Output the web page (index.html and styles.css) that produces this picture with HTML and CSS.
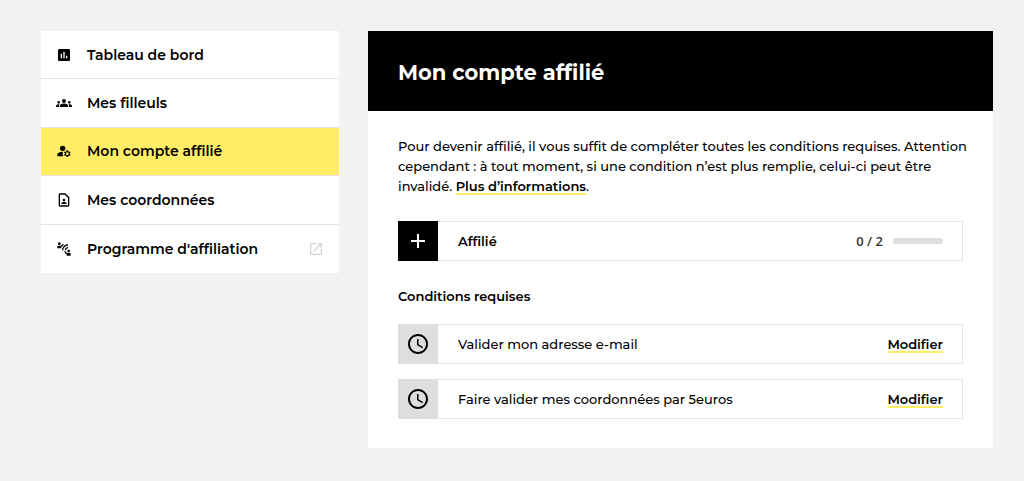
FILE: index.html
```html
<!DOCTYPE html>
<html lang="fr">
<head>
    <meta charset="UTF-8">
    <meta name="viewport" content="width=device-width, initial-scale=1.0">
    <title>Mon compte affilié</title>
    <link rel="stylesheet" href="styles.css">
</head>
<body>
    <div class="page">
        <nav class="menu" aria-label="Espace affilié">
            <a href="#tableau" class="menu-item">
                <svg class="icon" viewBox="0 0 24 24" aria-hidden="true"><path d="M19 3H5c-1.1 0-2 .9-2 2v14c0 1.1.9 2 2 2h14c1.1 0 2-.9 2-2V5c0-1.1-.9-2-2-2zM9 17H7v-7h2v7zm4 0h-2V7h2v10zm4 0h-2v-4h2v4z"/></svg>
                <span class="menu-label">Tableau de bord</span>
            </a>
            <a href="#filleuls" class="menu-item">
                <svg class="icon" viewBox="0 0 24 24" aria-hidden="true"><path d="M12 12.75c1.63 0 3.07.39 4.24.9 1.08.48 1.76 1.56 1.76 2.73V18H6v-1.61c0-1.18.68-2.26 1.76-2.73 1.17-.52 2.61-.91 4.24-.91zM4 13c1.1 0 2-.9 2-2s-.9-2-2-2-2 .9-2 2 .9 2 2 2zm1.13 1.1c-.37-.06-.74-.1-1.13-.1-.99 0-1.93.21-2.78.58C.48 14.9 0 15.62 0 16.43V18h4.5v-1.61c0-.83.23-1.61.63-2.29zM20 13c1.1 0 2-.9 2-2s-.9-2-2-2-2 .9-2 2 .9 2 2 2zm4 3.43c0-.81-.48-1.53-1.22-1.85-.85-.37-1.79-.58-2.78-.58-.39 0-.76.04-1.13.1.4.68.63 1.46.63 2.29V18H24v-1.57zM12 6c1.66 0 3 1.34 3 3s-1.34 3-3 3-3-1.34-3-3 1.34-3 3-3z"/></svg>
                <span class="menu-label">Mes filleuls</span>
            </a>
            <a href="#compte" class="menu-item active" aria-current="page">
                <svg class="icon" viewBox="0 0 24 24" aria-hidden="true"><circle cx="10" cy="8" r="4"/><path d="M10.67 13.02c-.22-.01-.44-.02-.67-.02-2.42 0-4.68.67-6.61 1.82-.88.52-1.39 1.5-1.39 2.53V20h9.26c-.79-1.13-1.26-2.51-1.26-4 0-1.07.25-2.07.67-2.98z"/><path d="M20.75 16c0-.22-.03-.42-.06-.63l1.14-1.01-1-1.73-1.45.49c-.32-.27-.68-.48-1.08-.63L18 11h-2l-.3 1.49c-.4.15-.76.36-1.08.63l-1.45-.49-1 1.73 1.14 1.01c-.03.21-.06.41-.06.63s.03.42.06.63l-1.14 1.01 1 1.73 1.45-.49c.32.27.68.48 1.08.63L16 21h2l.3-1.49c.4-.15.76-.36 1.08-.63l1.45.49 1-1.73-1.14-1.01c.03-.21.06-.41.06-.63zM17 18c-1.1 0-2-.9-2-2s.9-2 2-2 2 .9 2 2-.9 2-2 2z"/></svg>
                <span class="menu-label">Mon compte affilié</span>
            </a>
            <a href="#coordonnees" class="menu-item">
                <svg class="icon" viewBox="0 0 24 24" aria-hidden="true"><path d="M13.17 4L18 8.83V20H6V4h7.17M14 2H6c-1.1 0-2 .9-2 2v16c0 1.1.9 2 2 2h12c1.1 0 2-.9 2-2V8l-6-6zm-2 12c1.1 0 2-.9 2-2s-.9-2-2-2-2 .9-2 2 .9 2 2 2zm4 3.43c0-.81-.48-1.53-1.22-1.85-.85-.37-1.79-.58-2.78-.58s-1.93.21-2.78.58C8.48 15.9 8 16.62 8 17.43V18h8v-.57z"/></svg>
                <span class="menu-label">Mes coordonnées</span>
            </a>
            <a href="#programme" class="menu-item" target="_blank">
                <svg class="icon" viewBox="0 0 24 24" aria-hidden="true"><path d="M11 14H9c0-4.97 4.03-9 9-9v2c-3.87 0-7 3.13-7 7zm7-3V9c-2.76 0-5 2.24-5 5h2c0-1.66 1.34-3 3-3zM7 4c0-1.11-.89-2-2-2s-2 .89-2 2 .89 2 2 2 2-.89 2-2zm4.45.5h-2C9.21 5.92 7.99 7 6.5 7h-3C2.67 7 2 7.67 2 8.5V11h6V8.74c1.86-.59 3.25-2.23 3.45-4.24zM19 17c1.11 0 2-.89 2-2s-.89-2-2-2-2 .89-2 2 .89 2 2 2zm1.5 1h-3c-1.49 0-2.71-1.08-2.95-2.5h-2c.2 2.01 1.6 3.65 3.45 4.24V22h6v-2.5c0-.83-.67-1.5-1.5-1.5z"/></svg>
                <span class="menu-label">Programme d'affiliation</span>
                <svg class="icon icon-external" viewBox="0 0 24 24" aria-hidden="true"><path d="M19 19H5V5h7V3H5c-1.11 0-2 .9-2 2v14c0 1.1.89 2 2 2h14c1.1 0 2-.9 2-2v-7h-2v7zM14 3v2h3.59l-9.83 9.83 1.41 1.41L19 6.41V10h2V3h-7z"/></svg>
            </a>
        </nav>

        <main class="panel">
            <header class="panel-header">
                <h1>Mon compte affilié</h1>
            </header>
            <div class="panel-body">
                <p class="intro">Pour devenir affilié, il vous suffit de compléter toutes les conditions requises. Attention cependant : à tout moment, si une condition n’est plus remplie, celui-ci peut être invalidé. <a href="#infos" class="link">Plus d’informations</a>.</p>

                <div class="row">
                    <button type="button" class="tile tile-dark" aria-label="Afficher les conditions">
                        <svg class="tile-icon" viewBox="0 0 24 24" aria-hidden="true"><path d="M19 13h-6v6h-2v-6H5v-2h6V5h2v6h6z"/></svg>
                    </button>
                    <span class="row-label strong">Affilié</span>
                    <label class="count" for="progression">0 / 2</label>
                    <progress id="progression" class="progress" value="0" max="2"></progress>
                </div>

                <h2>Conditions requises</h2>

                <ul class="conditions">
                    <li class="row">
                        <span class="tile">
                            <svg class="tile-icon" viewBox="0 0 24 24" aria-hidden="true"><path d="M11.99 2C6.47 2 2 6.48 2 12s4.47 10 9.99 10C17.52 22 22 17.52 22 12S17.52 2 11.99 2zM12 20c-4.42 0-8-3.58-8-8s3.58-8 8-8 8 3.58 8 8-3.58 8-8 8zm.5-13H11v6l5.25 3.15.75-1.23-4.5-2.67z"/></svg>
                        </span>
                        <span class="row-label">Valider mon adresse e-mail</span>
                        <a href="#email" class="link">Modifier</a>
                    </li>
                    <li class="row">
                        <span class="tile">
                            <svg class="tile-icon" viewBox="0 0 24 24" aria-hidden="true"><path d="M11.99 2C6.47 2 2 6.48 2 12s4.47 10 9.99 10C17.52 22 22 17.52 22 12S17.52 2 11.99 2zM12 20c-4.42 0-8-3.58-8-8s3.58-8 8-8 8 3.58 8 8-3.58 8-8 8zm.5-13H11v6l5.25 3.15.75-1.23-4.5-2.67z"/></svg>
                        </span>
                        <span class="row-label">Faire valider mes coordonnées par 5euros</span>
                        <a href="#coordonnees" class="link">Modifier</a>
                    </li>
                </ul>
            </div>
        </main>
    </div>
</body>
</html>
```

FILE: styles.css
```css
:root {
    --yellow: #ffed66;
    --grey: #dedee0;
    --line: #e4e4e4;
    --background: #f2f2f2;
}

* {
    box-sizing: border-box;
}

body {
    margin: 0;
    font-family: Montserrat, Inter, sans-serif;
    font-size: 13px;
    line-height: 20px;
    font-weight: 500;
    background-color: var(--background);
    color: #000;
}

.page {
    display: grid;
    grid-template-columns: minmax(240px, 298px) 1fr;
    align-items: start;
    gap: 29px;
    padding: 31px 31px 32px 41px;
}

/* Menu */
.menu {
    display: grid;
    grid-auto-rows: 1fr;
    min-height: 242px;
    background-color: #fff;
}

.menu-item {
    display: flex;
    align-items: center;
    gap: 15px;
    padding: 0 15px;
    border-bottom: 1px solid var(--line);
    color: #000;
    font-size: 14px;
    font-weight: 600;
    text-decoration: none;
}

.menu-item:last-child {
    border-bottom: 0;
}

.menu-item.active {
    background-color: var(--yellow);
}

.menu-label {
    flex: 1;
}

.icon {
    width: 16px;
    height: 16px;
    flex-shrink: 0;
    fill: #000;
}

.icon-external {
    fill: #d4d4d4;
}

/* Panel */
.panel {
    background-color: #fff;
}

.panel-header {
    padding: 28px 30px 24px;
    background-color: #000;
    color: #fff;
}

h1 {
    margin: 0;
    font-size: 21px;
    line-height: 28px;
    font-weight: 700;
}

.panel-body {
    padding: 25px 30px 29px;
}

.intro {
    margin: 0 -10px 25px 0;
}

h2 {
    margin: 25px 0 18px;
    font-size: 13px;
    line-height: 20px;
    font-weight: 600;
}

.link {
    color: #000;
    font-weight: 600;
    text-decoration: underline 2px var(--yellow);
    text-underline-offset: 2px;
    text-decoration-skip-ink: none;
}

.conditions {
    display: grid;
    gap: 15px;
    margin: 0;
    padding: 0;
    list-style: none;
}

.row {
    display: flex;
    align-items: center;
    min-height: 40px;
    padding-right: 20px;
    background-color: #fff;
    box-shadow: inset 0 0 0 1px var(--line);
}

.row-label {
    flex: 1;
    padding-left: 20px;
}

.strong {
    font-weight: 600;
}

.tile {
    display: flex;
    align-items: center;
    justify-content: center;
    align-self: stretch;
    width: 40px;
    padding: 0;
    border: 0;
    background-color: var(--grey);
}

.tile-icon {
    width: 24px;
    height: 24px;
}

.tile-dark {
    background-color: #000;
    fill: #fff;
}

.count {
    margin-right: 10px;
    color: #333;
    font-family: "Open Sans", sans-serif;
    font-weight: 600;
}

.progress {
    width: 50px;
    height: 6px;
    border: 0;
    border-radius: 3px;
    overflow: hidden;
    appearance: none;
    background-color: var(--grey);
}

.progress::-webkit-progress-bar {
    background-color: var(--grey);
}

.progress::-webkit-progress-value {
    background-color: var(--yellow);
}
```
